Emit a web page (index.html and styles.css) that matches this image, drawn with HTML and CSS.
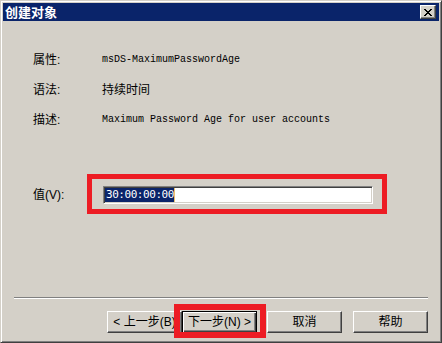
FILE: index.html
```html
<!DOCTYPE html>
<html lang="zh-CN">
<head>
<meta charset="utf-8">
<title>创建对象</title>
<link rel="stylesheet" href="styles.css">
</head>
<body>
<div class="window">
  <div class="titlebar">
    <span class="title">创建对象</span>
    <button class="close" type="button" aria-label="关闭">
      <svg width="8" height="7" viewBox="0 0 8 7" shape-rendering="crispEdges">
        <path fill="#000" d="M0 0h2v1H0zM6 0h2v1H6zM1 1h2v1H1zM5 1h2v1H5zM2 2h4v1H2zM3 3h2v1H3zM2 4h4v1H2zM1 5h2v1H1zM5 5h2v1H5zM0 6h2v1H0zM6 6h2v1H6z"/>
      </svg>
    </button>
  </div>
  <div class="body">
    <div class="props">
      <div class="label">属性:</div><div class="value mono">msDS-MaximumPasswordAge</div>
      <div class="label">语法:</div><div class="value">持续时间</div>
      <div class="label">描述:</div><div class="value mono">Maximum Password Age for user accounts</div>
    </div>
    <div class="value-row">
      <label class="label vlabel">值(V):</label>
      <div class="edit">
        <span class="sel">30:00:00:00</span><span class="caret"></span>
        <div class="mark"></div>
      </div>
    </div>
    <div class="footer">
      <div class="sep"></div>
      <div class="buttons">
        <button class="btn back" type="button">&lt; 上一步(B)</button>
        <button class="btn default next" type="button">下一步(N) &gt;<span class="mark"></span></button>
        <button class="btn cancel" type="button">取消</button>
        <button class="btn" type="button">帮助</button>
      </div>
    </div>
  </div>
</div>
</body>
</html>
```
FILE: styles.css
```css
html, body {
  margin: 0;
  padding: 0;
}
body {
  background: #d4d0c8;
  font-family: "Liberation Sans", "Noto Sans CJK SC", sans-serif;
  font-size: 12px;
  color: #000;
}
.window {
  width: 442px;
  height: 343px;
  box-sizing: border-box;
  border: 1px solid;
  border-color: #d4d0c8 #404040 #404040 #d4d0c8;
  box-shadow: inset 1px 1px #fff, inset -1px -1px #808080;
  padding: 2px;
  display: flex;
  flex-direction: column;
  background: #d4d0c8;
}
.titlebar {
  height: 18px;
  flex: none;
  background: #0a246a;
  display: flex;
  align-items: center;
  justify-content: space-between;
  padding-left: 2px;
}
.title {
  color: #fff;
  font-family: "Noto Sans CJK SC", sans-serif;
  font-weight: bold;
  font-size: 13px;
  line-height: 18px;
}
.close {
  width: 16px;
  height: 14px;
  box-sizing: border-box;
  margin-right: 3px;
  padding: 0;
  border: 1px solid;
  border-color: #fff #404040 #404040 #fff;
  box-shadow: inset -1px -1px #808080;
  background: #d4d0c8;
  display: flex;
  align-items: center;
  justify-content: center;
}
.body {
  flex: 1;
  display: flex;
  flex-direction: column;
}
.props {
  display: grid;
  grid-template-columns: 69px auto;
  grid-template-rows: 31px 30px 30px;
  align-items: center;
  margin: 23px 0 0 30px;
}
.label {
  font-size: 12px;
  line-height: 14px;
}
.value {
  font-size: 12px;
  line-height: 14px;
}
.mono {
  font-family: "Liberation Mono", monospace;
  font-size: 10px;
}
.value-row {
  display: flex;
  align-items: center;
  margin: 51px 0 0 30px;
}
.vlabel {
  width: 70px;
}
.edit {
  position: relative;
  width: 270px;
  height: 18px;
  box-sizing: border-box;
  background: #fff;
  border: 1px solid;
  border-color: #808080 #fff #fff #808080;
  box-shadow: inset 1px 1px #404040, inset -1px -1px #d4d0c8;
  padding: 1px 0 0 1px;
  display: flex;
  align-items: flex-start;
}
.sel {
  background: #0a246a;
  color: #fff;
  font-family: "DejaVu Sans Mono", monospace;
  font-size: 11px;
  line-height: 14px;
  letter-spacing: -0.45px;
  padding-left: 1px;
}
.caret {
  width: 1px;
  height: 14px;
  background: #e8c070;
}
.mark {
  position: absolute;
  border: 5px solid #ed1c24;
  pointer-events: none;
}
.edit .mark {
  left: -17px;
  top: -13px;
  right: -15px;
  bottom: -11px;
}
.footer {
  margin-top: auto;
}
.sep {
  border-top: 1px solid #808080;
  border-bottom: 1px solid #fff;
  margin: 0 11px;
}
.buttons {
  display: flex;
  justify-content: flex-end;
  padding: 12px 11px 7px 0;
}
.btn {
  width: 75px;
  height: 22px;
  box-sizing: border-box;
  margin: 0;
  padding: 0;
  border: 1px solid;
  border-color: #fff #404040 #404040 #fff;
  box-shadow: inset -1px -1px #808080;
  background: #d4d0c8;
  font-family: "Liberation Sans", "Noto Sans CJK SC", sans-serif;
  font-size: 12px;
  line-height: 18px;
  color: #000;
  white-space: nowrap;
  overflow: hidden;
  text-align: center;
}
.btn.default {
  position: relative;
  overflow: visible;
  border: 1px solid #000;
  box-shadow: inset 1px 1px #fff, inset -1px -1px #404040, inset -2px -2px #808080;
}
.btn.default .mark {
  left: -9px;
  top: -8px;
  right: -10px;
  bottom: -6px;
  border-width: 6px;
}
.next {
  margin-right: 10px;
}
.cancel {
  margin-right: 11px;
}
```
